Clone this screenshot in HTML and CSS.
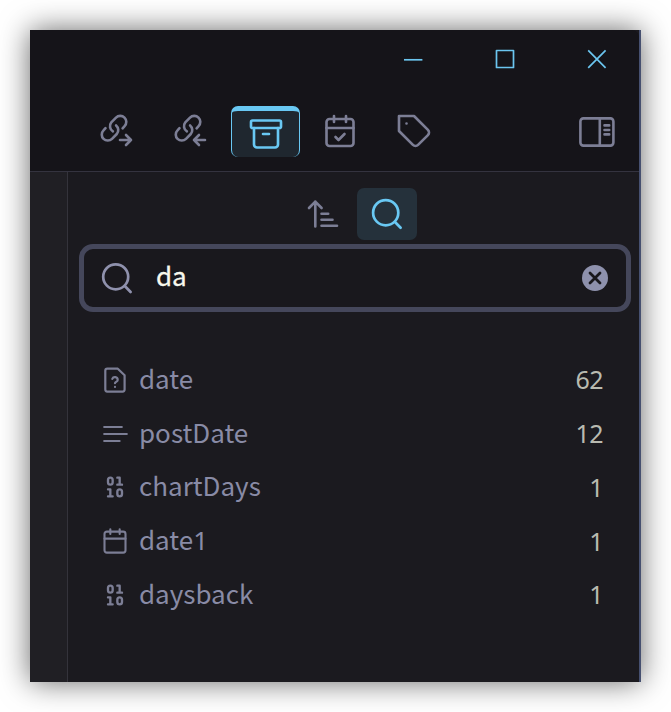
FILE: index.html
```html
<!DOCTYPE html>
<html lang="en">
<head>
<meta charset="utf-8">
<title>Properties</title>
<link rel="stylesheet" href="styles.css">
</head>
<body>
<div class="window">
  <header class="header">
    <div class="controls">
      <svg width="20" height="20"><path d="M1 10.8h18.4"/></svg>
      <svg width="20" height="20"><rect x="1.5" y="1.5" width="17" height="17"/></svg>
      <svg width="20" height="20"><path d="M1.2 1.4l17.4 17.4M18.6 1.4L1.2 18.8"/></svg>
    </div>
    <nav class="tabs">
      <svg class="tab link" viewBox="0 0 34 34"><path d="M22.6 15.3l2-2.2a6 6 0 0 0-8.6-8.4l-4.7 4.7a6.1 6.1 0 0 0 1.6 9M5.5 15.2l-2 2.2a5.9 5.9 0 0 0 8.5 8.4l4.8-4.8a6.1 6.1 0 0 0-.7-8.6"/><path d="M20 27h11M26 22l5 5-5 5"/></svg>
      <svg class="tab link" viewBox="0 0 34 34"><path d="M22.6 15.3l2-2.2a6 6 0 0 0-8.6-8.4l-4.7 4.7a6.1 6.1 0 0 0 1.6 9M5.5 15.2l-2 2.2a5.9 5.9 0 0 0 8.5 8.4l4.8-4.8a6.1 6.1 0 0 0-.7-8.6"/><path d="M31 27H20M25 22l-5 5 5 5"/></svg>
      <div class="tab active"><svg viewBox="0 0 24 24"><rect x="2" y="3" width="20" height="5" rx="1"/><path d="M4 8v11a2 2 0 0 0 2 2h12a2 2 0 0 0 2-2V8M10 12h4"/></svg></div>
      <svg class="tab calendar" viewBox="0 0 24 24"><rect x="3" y="4" width="18" height="18" rx="2"/><path d="M8 2v4M16 2v4M3 10h18M9 16l2 2 4-4"/></svg>
      <svg class="tab tag" viewBox="0 0 24 24"><path d="M12 2H2v10l9.29 9.29c.94.94 2.48.94 3.42 0l6.58-6.58c.94-.94.94-2.48 0-3.42L12 2ZM7 7h.01"/></svg>
      <svg class="tab sidebar" viewBox="0 0 36 32"><rect x="1.4" y="2.4" width="33" height="27.2" rx="3"/><path d="M20.8 2.4v27.2M25.5 9.4h4.7M25.5 14h4.7M25.5 18.4h4.7"/></svg>
    </nav>
  </header>
  <div class="body">
    <aside class="gutter"></aside>
    <main class="panel">
      <div class="toolbar">
        <svg class="sort" viewBox="0 0 34 34"><path d="M9.3 28.5V3.5M3 10l6.3-6.3 6.3 6.3M15.5 15.7h6.7M15.5 21.7h11M15.5 27.8h15.5"/></svg>
        <div class="toggle"><svg viewBox="0 0 34 34"><circle cx="15.7" cy="15.7" r="12.6"/><path d="M25 25l5.6 5.7"/></svg></div>
      </div>
      <div class="search">
        <svg class="lens" viewBox="0 0 34 34"><circle cx="15.7" cy="15.8" r="12.5"/><path d="M24.8 25l5.8 6"/></svg>
        <span class="query">da</span>
        <svg class="clear" viewBox="0 0 26 26"><circle cx="13" cy="13" r="13"/><path d="M8 8l10 10M18 8L8 18"/></svg>
      </div>
      <div class="list">
        <div class="row"><svg viewBox="0 0 28 28"><path d="M6.3 2.7h10.5l6.8 6.6v14.3a2 2 0 0 1-2 2H6.3a2 2 0 0 1-2-2V4.7a2 2 0 0 1 2-2z"/><path d="M11.3 12.9a2.8 2.8 0 0 1 5.4 1c0 1.8-2.7 2.1-2.7 3.3M14 20.9v.1"/></svg><span class="name">date</span><span class="count">62</span></div>
        <div class="row"><svg viewBox="0 0 28 28"><path d="M3.2 7h17.6M3.2 14h22.6M3.2 21h15.4"/></svg><span class="name">postDate</span><span class="count">12</span></div>
        <div class="row"><svg class="binary" viewBox="0 0 24 24"><rect x="14" y="14" width="4" height="6" rx="2"/><rect x="6" y="4" width="4" height="6" rx="2"/><path d="M6 20h4M14 10h4M6 14h2v6M14 4h2v6"/></svg><span class="name">chartDays</span><span class="count">1</span></div>
        <div class="row"><svg class="date" viewBox="0 0 24 24"><rect x="3" y="4" width="18" height="18" rx="2"/><path d="M8 2v4M16 2v4M3 10h18"/></svg><span class="name">date<span class="digit">1</span></span><span class="count">1</span></div>
        <div class="row"><svg class="binary" viewBox="0 0 24 24"><rect x="14" y="14" width="4" height="6" rx="2"/><rect x="6" y="4" width="4" height="6" rx="2"/><path d="M6 20h4M14 10h4M6 14h2v6M14 4h2v6"/></svg><span class="name">daysback</span><span class="count">1</span></div>
      </div>
    </main>
  </div>
</div>
</body>
</html>
```
FILE: styles.css
```css
* { box-sizing: border-box; }
body {
  margin: 0;
  padding: 30px;
  height: 712px;
  overflow: hidden;
  background: #fff;
  font-family: "Noto Sans CJK SC", "Noto Sans", sans-serif;
}
svg {
  display: block;
  flex: none;
  fill: none;
  stroke: currentColor;
  stroke-linecap: round;
  stroke-linejoin: round;
}
.window {
  display: flex;
  flex-direction: column;
  width: 611px;
  height: 652px;
  border-right: 2px solid #465070;
  background: #1b1a1f;
  box-shadow: 0 0 28px rgba(0, 0, 0, .6);
}
.header {
  height: 142px;
  background: #151419;
  border-bottom: 1px solid #34333f;
  border-top-right-radius: 7px;
}
.controls {
  display: flex;
  justify-content: flex-end;
  gap: 72px;
  padding: 19px 32px 0 0;
  color: #6bc5ef;
}
.controls svg { stroke-width: 1.7; stroke-linecap: butt; }
.tabs {
  display: flex;
  align-items: flex-start;
  padding: 37px 24px 0 70px;
  color: #7c7e95;
}
.tab { stroke-width: 1.75; }
.link { width: 34px; height: 34px; margin: 7px 40px 0 0; stroke-width: 2.6; }
.link + .link { margin-right: 23px; }
.active {
  width: 69px;
  height: 51px;
  padding: 5px 0 0 16px;
  border: 1px solid #69c8f3;
  border-top-width: 5px;
  border-bottom: 0 solid #69c8f3;
  border-radius: 7px;
  background: #1f272f;
  color: #69c8f3;
}
.active svg { width: 36px; height: 36px; }
.calendar { width: 36px; height: 36px; margin: 7px 0 0 22px; }
.tag { width: 36px; height: 36px; margin: 7px 0 0 38px; }
.sidebar { width: 36px; height: 32px; margin: 10px 0 0 auto; stroke-width: 2.6; }
.body { display: flex; flex: 1; min-height: 0; }
.gutter { width: 38px; background: #201f24; border-right: 1px solid #34333b; }
.panel { flex: 1; }
.toolbar {
  display: flex;
  height: 72px;
  padding: 16px 0 0 238px;
  color: #7c7e95;
}
.sort { width: 34px; height: 34px; margin: 10px 17px 0 0; stroke-width: 2.6; }
.toggle {
  width: 60px;
  height: 52px;
  padding: 9px 0 0 13px;
  border-radius: 7px;
  background: #25313b;
  color: #69c8f3;
}
.toggle svg { width: 34px; height: 34px; stroke-width: 2.7; }
.search {
  display: flex;
  align-items: center;
  width: 552px;
  height: 68px;
  margin-left: 11px;
  padding: 0 18px 0 16px;
  border: 5px solid #45475b;
  border-radius: 14px;
  background: #19181d;
  color: #8f91ad;
}
.lens { width: 34px; height: 34px; stroke-width: 2.7; }
.query { flex: 1; margin-left: 22px; padding-bottom: 6px; color: #f8f8ed; font-size: 26px; -webkit-text-stroke: .3px #f8f8ed; line-height: 40px; }
.clear { width: 26px; height: 26px; }
.clear circle { fill: #8e91ad; stroke: none; }
.clear path { stroke: #19181d; stroke-width: 2.8; }
.list { padding: 41px 36px 0 33px; color: #898ba6; }
.row { display: flex; align-items: center; height: 53.75px; font-size: 26px; line-height: 40px; }
.row svg { width: 28px; height: 28px; margin-right: 10px; stroke-width: 2.2; color: #7c7e95; }
.row .binary { stroke-width: 2; }
.row .date { stroke-width: 1.8; }
.name { padding-bottom: 4px; }
.digit { font-family: "Noto Sans", sans-serif; }
.count { margin-left: auto; padding-bottom: 1px; color: #b9bab0; font-family: "Noto Sans", sans-serif; font-size: 25px; letter-spacing: -.5px; }
```
